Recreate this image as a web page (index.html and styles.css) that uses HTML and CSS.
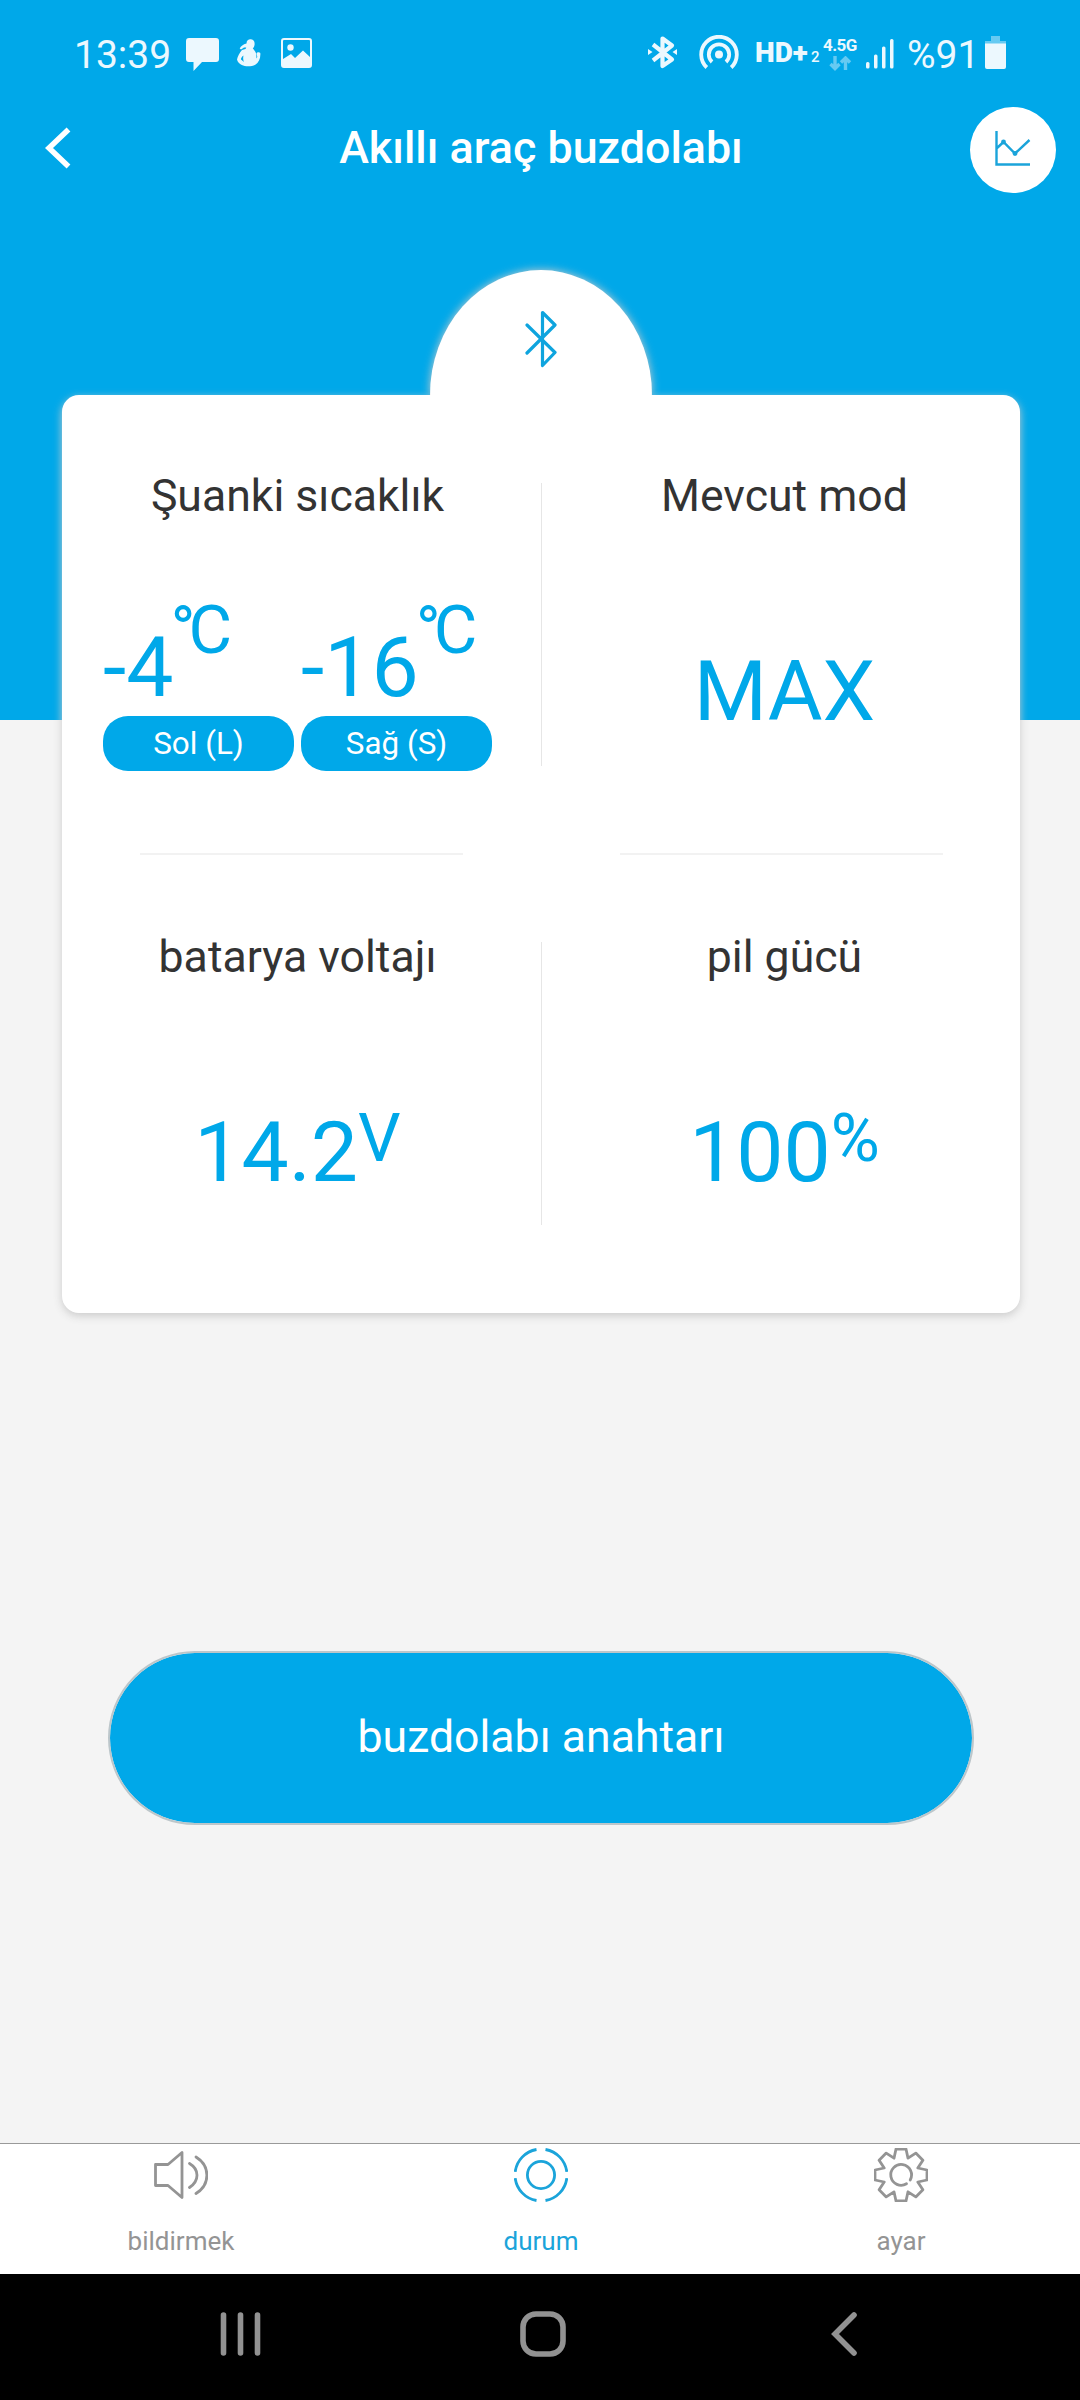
FILE: index.html
```html
<!DOCTYPE html>
<html lang="tr">
<head>
    <meta charset="UTF-8">
    <meta name="viewport" content="width=device-width, initial-scale=1.0">
    <title>Akıllı araç buzdolabı</title>
    <link rel="stylesheet" href="styles.css">
</head>
<body>
    <div class="hero">
        <div class="status-bar">
            <span class="clock">13:39</span>
            <svg class="icon-chat" width="33" height="33" viewBox="0 0 33 33"><path d="M3 0h27a3 3 0 0 1 3 3v18a3 3 0 0 1-3 3H16l-8.500 9V24H3a3 3 0 0 1-3-3V3a3 3 0 0 1 3-3z"/></svg>
            <svg class="icon-person" width="24" height="28" viewBox="0 0 24 28"><path d="M9.500 4.500C9.500 1 12 0 14 .3c3 .4 4 3 3.500 5.700-.2 1.500-.8 2.500-1.700 3.300L18.500 13c1 2 1 4 .8 6.500l1-1.500-.8-3.500c.4-1.500 2.900-1.700 3.800-.6.500 5-1.500 9.600-5 11.900-4 2-10 2-13.500.2C2.500 25 .5 23 0 20.500c.5-3 2.500-6.500 5-9.500l3.500-1 .8-1.500H7L4 10.500 2.700 9.400C4 7 6 5.500 9.500 4.500z"/><path class="cut" d="M6.500 16.500c-2 1.500-2.700 3-2.500 4l3 2.500c-1-2-1-4.500-.5-6.500z"/></svg>
            <svg class="icon-image" width="31" height="30" viewBox="0 0 31 30"><rect class="line" x="1" y="1" width="29" height="28" rx="2"/><circle cx="9.500" cy="9.500" r="3.200"/><path d="M2 21l8-5 4 4 8-7.500 7 6.500v10H2z"/></svg>
            <span class="spacer"></span>
            <svg class="icon-bt" width="29" height="34" viewBox="0 0 29 34"><path class="line" d="M5 9.500l19 15-9.500 6.500V3.500l9.500 7-19 15"/><path d="M0 14l4.500 3L0 20zM29 14l-4.500 3 4.500 3z"/></svg>
            <svg class="icon-hotspot" width="40" height="34" viewBox="0 0 40 34"><circle cx="20" cy="19.500" r="4"/><path class="line" d="M7.800 32.500a17.800 17.800 0 1 1 24.400 0M13 27a10.200 10.200 0 1 1 14 0"/></svg>
            <span class="hd">HD+</span>
            <span class="sim">2</span>
            <div class="network">
                <span>4.5G</span>
                <svg width="24" height="15" viewBox="0 0 24 15"><path d="M7 0v12M2.500 8L7 12.500 11.500 8M17.500 14V2M13 6.500L17.500 2 22 6.500"/></svg>
            </div>
            <svg class="icon-signal" width="28" height="30" viewBox="0 0 28 30"><rect x="0" y="23" width="3.500" height="6.500" rx="1.500"/><rect x="8" y="15.500" width="3.500" height="14" rx="1.500"/><rect x="16" y="7.500" width="3.500" height="22" rx="1.500"/><rect x="24" y="0" width="3.500" height="29.500" rx="1.500"/></svg>
            <span class="percent">%91</span>
            <svg class="icon-battery" width="21" height="33" viewBox="0 0 21 33"><path class="faded" d="M6 0h9v5h6v3H0V5h6z"/><path d="M0 7.500h21V31a2 2 0 0 1-2 2H2a2 2 0 0 1-2-2z"/></svg>
        </div>

        <header>
            <a class="back-button" href="#"><svg width="26" height="42" viewBox="0 0 26 42"><path d="M23.500 2.500L4 21l19.500 18.500"/></svg></a>
            <h1>Akıllı araç buzdolabı</h1>
            <a class="chart-button" href="#"><svg width="36" height="36" viewBox="0 0 36 36"><path d="M1.500 1v33.500H35M1.500 18.500l7-6.500L20 23.500 34.500 10"/><circle cx="8.500" cy="12" r="2.400"/><circle cx="20" cy="23.500" r="2.400"/></svg></a>
        </header>
    </div>

    <main>
        <div class="dome">
            <svg width="32" height="58" viewBox="0 0 32 58"><path d="M2 15l28 27.500L17.500 55.500v-53L30 15 2 43"/></svg>
        </div>
        <div class="card">
            <div class="cell left">
                <h2>Şuanki sıcaklık</h2>
                <div class="temps">
                    <div class="temp">
                        <p>-4<span>°C</span></p>
                        <div class="pill">Sol (L)</div>
                    </div>
                    <div class="temp">
                        <p>-16<span>°C</span></p>
                        <div class="pill">Sağ (S)</div>
                    </div>
                </div>
            </div>
            <div class="v-line"></div>
            <div class="cell right">
                <h2>Mevcut mod</h2>
                <p class="value">MAX</p>
            </div>

            <div class="h-line"></div>
            <div></div>
            <div class="h-line"></div>

            <div class="cell left lower">
                <h2>batarya voltajı</h2>
                <p class="value">14.2<span>V</span></p>
            </div>
            <div class="v-line lower"></div>
            <div class="cell right lower">
                <h2>pil gücü</h2>
                <p class="value">100<span>%</span></p>
            </div>
        </div>

        <button class="power-button" type="button">buzdolabı anahtarı</button>
    </main>

    <nav class="tabs">
        <a class="tab" href="#">
            <svg width="54" height="54" viewBox="0 0 54 54"><path d="M1.500 16.500H14L28 4.500v45L14 37.500H1.500zM35.500 15.500c10 6 10 17 0 24M42 9c14.500 9 14.500 27.500 0 36.500"/></svg>
            <span>bildirmek</span>
        </a>
        <a class="tab active" href="#">
            <svg width="54" height="54" viewBox="-27 -27 54 54"><circle r="13.600"/><path d="M4.500-25.500A26 26 0 0 1 25.800-3.200M25.800 3.200A26 26 0 0 1 4.500 25.500M-4.500 25.500A26 26 0 0 1-25.800 3.200M-25.800-3.200A26 26 0 0 1-4.500-25.500"/></svg>
            <span>durum</span>
        </a>
        <a class="tab" href="#">
            <svg width="54" height="54" viewBox="-27 -27 54 54"><path d="M-5-26H5L7-16.800 14.800-21.900 21.900-14.800 16.800-7 26-5V5L16.800 7 21.900 14.800 14.800 21.900 7 16.800 5 26H-5L-7 16.800-14.800 21.900-21.900 14.800-16.800 7-26 5V-5L-16.800-7-21.900-14.800-14.800-21.900-7-16.800z"/><path d="M5.500 8.800A10.400 10.400 0 1 1 9.200 5"/></svg>
            <span>ayar</span>
        </a>
    </nav>

    <div class="android-nav">
        <svg width="42" height="46" viewBox="0 0 42 46"><path d="M3.500 4v38M20.500 4v38M37.500 4v38"/></svg>
        <svg class="home" width="48" height="48" viewBox="0 0 48 48"><rect x="4" y="4" width="40" height="40" rx="13"/></svg>
        <svg width="28" height="46" viewBox="0 0 28 46"><path d="M24 4L5 23l19 19"/></svg>
    </div>
</body>
</html>
```
FILE: styles.css
```css
* {
    box-sizing: border-box;
}
body {
    margin: 0;
    width: 1080px;
    height: 2400px;
    display: flex;
    flex-direction: column;
    font-family: Roboto, "Liberation Sans", sans-serif;
    background-color: #f4f4f4;
}
h1, h2, p {
    margin: 0;
    font-weight: 400;
}
a {
    text-decoration: none;
}
svg {
    display: block;
    flex-shrink: 0;
}
.hero {
    height: 720px;
    flex-shrink: 0;
    background-color: #00a8e9;
}

/* Status bar */
.status-bar {
    display: flex;
    align-items: flex-start;
    height: 106px;
    padding: 35px 74px 0 74px;
    color: #ecf8fe;
}
.status-bar svg {
    fill: #ecf8fe;
}
.status-bar .line {
    fill: none;
    stroke: #ecf8fe;
}
.status-bar .cut {
    fill: #00a8e9;
}
.clock {
    width: 112px;
    font-size: 39px;
    line-height: 40px;
}
.icon-chat {
    margin: 3px 18px 0 0;
}
.icon-person {
    margin: 4px 20px 0 0;
}
.icon-image {
    margin-top: 3px;
}
.icon-image .line {
    stroke-width: 2;
}
.spacer {
    flex: 1;
}
.icon-bt {
    margin-right: 22px;
}
.icon-bt .line {
    stroke-width: 4.2;
    stroke-linejoin: round;
}
.icon-hotspot .line {
    stroke-width: 3.8;
}
.hd {
    width: 56px;
    margin-left: 16px;
    font-size: 28px;
    font-weight: 900;
    line-height: 36px;
}
.sim {
    width: 12px;
    font-size: 15px;
    font-weight: 500;
    line-height: 44px;
}
.network {
    width: 43px;
    font-size: 17px;
    font-weight: 700;
    line-height: 21px;
}
.network span {
    display: block;
    letter-spacing: -0.6px;
}
.network svg {
    margin-left: 5px;
    fill: none;
    stroke: #66caf2;
    stroke-width: 3.4;
}
.icon-signal {
    margin-top: 4px;
}
.percent {
    width: 78px;
    margin-left: 13px;
    font-size: 39px;
    line-height: 40px;
}
.icon-battery {
    margin-top: 1px;
}
.icon-battery .faded {
    fill: #66caf2;
}

/* Title row */
header {
    display: flex;
    justify-content: space-between;
    align-items: center;
    height: 88px;
    padding: 0 24px 0 45px;
}
header h1 {
    font-size: 44.8px;
    font-weight: 500;
    line-height: 56px;
    color: #fff;
    margin: 0 0 4px 41px;
}
.back-button {
    margin-bottom: 4px;
}
.back-button path {
    fill: none;
    stroke: #fff;
    stroke-width: 5.5;
}
.chart-button {
    display: flex;
    align-items: center;
    justify-content: center;
    width: 86px;
    height: 86px;
    border-radius: 50%;
    background-color: #fff;
}
.chart-button svg {
    fill: #1ba4da;
    margin-top: -4px;
}
.chart-button path {
    fill: none;
    stroke: #1ba4da;
    stroke-width: 2.4;
}

/* Card */
main {
    position: relative;
    display: flex;
    flex-direction: column;
    align-items: center;
    margin-top: -450px;
}
.dome {
    display: flex;
    justify-content: center;
    width: 222px;
    height: 125px;
    padding-top: 40px;
    margin-left: 2px;
    background-color: #fff;
    border-radius: 50% 50% 0 0 / 100% 100% 0 0;
    box-shadow: 0 0 9px #ccc;
}
.dome path {
    fill: none;
    stroke: #0ea4de;
    stroke-width: 3.2;
    stroke-linejoin: round;
    stroke-linecap: round;
}
.card {
    position: relative;
    display: grid;
    grid-template-columns: 479px 1px 478px;
    grid-template-rows: 458px 2px 458px;
    justify-items: center;
    width: 958px;
    margin-left: 2px;
    background-color: #fff;
    border-radius: 17px;
    box-shadow: 0 3px 9px #ccc;
}
/* hides the card's shadow where it meets the dome */
.card::before {
    content: "";
    position: absolute;
    top: -8px;
    left: 369px;
    width: 220px;
    height: 10px;
    background-color: #fff;
}
.cell {
    width: 100%;
    padding-top: 71px;
    text-align: center;
}
.cell.lower {
    padding-top: 72px;
}
.cell.left {
    padding-right: 8px;
}
.cell.right {
    padding-left: 7px;
}
.cell h2 {
    font-size: 44.6px;
    line-height: 60px;
    color: #333;
}
.value {
    margin-top: 116px;
    font-size: 84px;
    line-height: 100px;
    color: #00a8e9;
}
.value span {
    font-size: 67px;
    line-height: 0;
    vertical-align: 20px;
}
.v-line {
    width: 1px;
    height: 283px;
    margin-top: 88px;
    background-color: #e6e6e6;
}
.v-line.lower {
    margin-top: 87px;
}
.h-line {
    width: 323px;
    background-color: #f2f2f2;
}
.temps {
    display: flex;
    justify-content: center;
    gap: 7px;
    margin-top: 93px;
}
.temp {
    width: 191px;
}
.temp p {
    font-size: 84px;
    line-height: 98px;
    text-align: left;
    white-space: nowrap;
    color: #00a8e9;
}
.temp span {
    margin-left: -3px;
    font-size: 67px;
    line-height: 0;
    letter-spacing: -7px;
    vertical-align: 43px;
}
.pill {
    height: 55px;
    margin-top: -1px;
    font-size: 31.4px;
    line-height: 55px;
    color: #fff;
    background-color: #00a8e9;
    border-radius: 25px;
}

.power-button {
    width: 866px;
    height: 174px;
    margin: 338px 0 0 2px;
    font-family: inherit;
    font-size: 44.6px;
    line-height: 56px;
    padding: 0 0 3px;
    color: #fff;
    background-color: #00a8e9;
    background-clip: padding-box;
    border: 2px solid #bcc6ca;
    border-radius: 87px;
}

/* Bottom tabs */
.tabs {
    display: flex;
    flex-shrink: 0;
    height: 131px;
    margin-top: auto;
    background-color: #fff;
    border-top: 1px solid #999;
}
.tab {
    flex: 1;
    display: flex;
    flex-direction: column;
    align-items: center;
    gap: 22px;
    padding: 4px 0 0 2px;
    font-size: 26px;
    line-height: 34px;
    color: #949494;
}
.tab svg {
    fill: none;
    stroke: #949494;
    stroke-width: 2.8;
    stroke-linejoin: round;
    stroke-linecap: round;
}
.tab.active {
    color: #1ba4da;
}
.tab.active svg {
    stroke: #1ba4da;
    stroke-linecap: butt;
}

.android-nav {
    display: flex;
    flex-shrink: 0;
    justify-content: space-between;
    align-items: center;
    height: 126px;
    padding: 0 222px 6px 220px;
    background-color: #000;
}
.android-nav .home {
    margin-right: 7px;
}
.android-nav svg {
    fill: none;
    stroke: #929292;
    stroke-width: 5.6;
    stroke-linecap: round;
}
```
